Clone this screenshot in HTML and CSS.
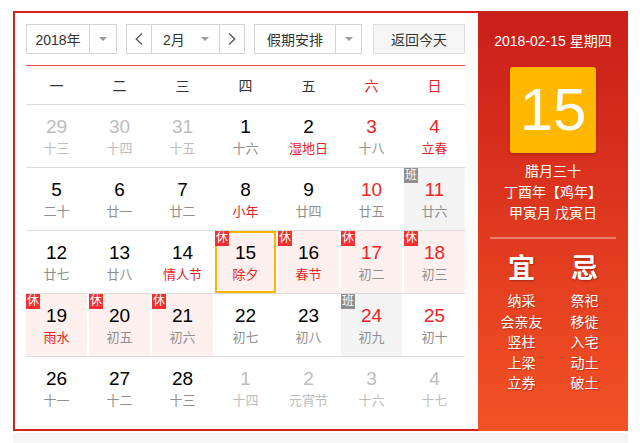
FILE: index.html
```html
<!DOCTYPE html>
<html lang="zh-CN">
<head>
<meta charset="utf-8">
<title>万年历</title>
<link rel="stylesheet" href="styles.css">
</head>
<body>
<div class="widget">
  <div class="cal">
    <div class="controls">
      <div class="sel year"><span class="sel-text">2018年</span><span class="sel-arrow"><i class="caret"></i></span></div>
      <div class="sel month">
        <span class="nav"><svg width="8" height="12" viewBox="0 0 8 12"><polyline points="7,0.5 1.2,6 7,11.5" fill="none" stroke="#555" stroke-width="1.3"/></svg></span>
        <span class="month-mid"><span>2月</span><i class="caret"></i></span>
        <span class="nav nav-r"><svg width="8" height="12" viewBox="0 0 8 12"><polyline points="1,0.5 6.8,6 1,11.5" fill="none" stroke="#555" stroke-width="1.3"/></svg></span>
      </div>
      <div class="sel holiday"><span class="sel-text">假期安排</span><span class="sel-arrow"><i class="caret"></i></span></div>
      <div class="btn">返回今天</div>
    </div>
    <div class="redline"></div>
    <div class="week">
      <span>一</span><span>二</span><span>三</span><span>四</span><span>五</span><span class="we">六</span><span class="we">日</span>
    </div>
    <div class="row">
      <div class="cell other"><div class="num">29</div><div class="lunar">十三</div></div>
      <div class="cell other"><div class="num">30</div><div class="lunar">十四</div></div>
      <div class="cell other"><div class="num">31</div><div class="lunar">十五</div></div>
      <div class="cell"><div class="num">1</div><div class="lunar">十六</div></div>
      <div class="cell"><div class="num">2</div><div class="lunar fest">湿地日</div></div>
      <div class="cell wkd"><div class="num">3</div><div class="lunar">十八</div></div>
      <div class="cell wkd"><div class="num">4</div><div class="lunar fest">立春</div></div>
    </div>
    <div class="row">
      <div class="cell"><div class="num">5</div><div class="lunar">二十</div></div>
      <div class="cell"><div class="num">6</div><div class="lunar">廿一</div></div>
      <div class="cell"><div class="num">7</div><div class="lunar">廿二</div></div>
      <div class="cell"><div class="num">8</div><div class="lunar fest">小年</div></div>
      <div class="cell"><div class="num">9</div><div class="lunar">廿四</div></div>
      <div class="cell wkd"><div class="num">10</div><div class="lunar">廿五</div></div>
      <div class="cell wkd work"><span class="badge ban">班</span><div class="num">11</div><div class="lunar">廿六</div></div>
    </div>
    <div class="row">
      <div class="cell"><div class="num">12</div><div class="lunar">廿七</div></div>
      <div class="cell"><div class="num">13</div><div class="lunar">廿八</div></div>
      <div class="cell"><div class="num">14</div><div class="lunar fest">情人节</div></div>
      <div class="cell rest today"><span class="badge">休</span><div class="num">15</div><div class="lunar fest">除夕</div></div>
      <div class="cell rest"><span class="badge">休</span><div class="num">16</div><div class="lunar fest">春节</div></div>
      <div class="cell rest wkd"><span class="badge">休</span><div class="num">17</div><div class="lunar">初二</div></div>
      <div class="cell rest wkd"><span class="badge">休</span><div class="num">18</div><div class="lunar">初三</div></div>
    </div>
    <div class="row">
      <div class="cell rest"><span class="badge">休</span><div class="num">19</div><div class="lunar fest">雨水</div></div>
      <div class="cell rest"><span class="badge">休</span><div class="num">20</div><div class="lunar">初五</div></div>
      <div class="cell rest"><span class="badge">休</span><div class="num">21</div><div class="lunar">初六</div></div>
      <div class="cell"><div class="num">22</div><div class="lunar">初七</div></div>
      <div class="cell"><div class="num">23</div><div class="lunar">初八</div></div>
      <div class="cell wkd work"><span class="badge ban">班</span><div class="num">24</div><div class="lunar">初九</div></div>
      <div class="cell wkd"><div class="num">25</div><div class="lunar">初十</div></div>
    </div>
    <div class="row">
      <div class="cell"><div class="num">26</div><div class="lunar">十一</div></div>
      <div class="cell"><div class="num">27</div><div class="lunar">十二</div></div>
      <div class="cell"><div class="num">28</div><div class="lunar">十三</div></div>
      <div class="cell other"><div class="num">1</div><div class="lunar">十四</div></div>
      <div class="cell other"><div class="num">2</div><div class="lunar">元宵节</div></div>
      <div class="cell other"><div class="num">3</div><div class="lunar">十六</div></div>
      <div class="cell other"><div class="num">4</div><div class="lunar">十七</div></div>
    </div>
  </div>
  <div class="side">
    <div class="side-date">2018-02-15 星期四</div>
    <div class="big-day">15</div>
    <div class="side-lunar">
      <div>腊月三十</div>
      <div>丁酉年【鸡年】</div>
      <div>甲寅月 戊寅日</div>
    </div>
    <div class="side-sep"></div>
    <div class="yiji">
      <div class="yj-col">
        <div class="yj-title">宜</div>
        <div>纳采</div><div>会亲友</div><div>竖柱</div><div>上梁</div><div>立券</div>
      </div>
      <div class="yj-col">
        <div class="yj-title">忌</div>
        <div>祭祀</div><div>移徙</div><div>入宅</div><div>动土</div><div>破土</div>
      </div>
    </div>
  </div>
</div>
<div class="below"></div>
</body>
</html>
```

FILE: styles.css
```css
* { box-sizing: border-box; }
html, body { margin: 0; padding: 0; background: #fff; }
body {
  font-family: "Liberation Sans", "Noto Sans CJK SC", sans-serif;
  color: #333;
  padding: 11px 0 0 13px;
}
.widget {
  display: flex;
  width: 615px;
  height: 420px;
}
.cal {
  width: 465px;
  border: 2px solid #d8201c;
  border-right: none;
  padding: 11px 13px 10px 11px;
  background: #fff;
}
.controls {
  display: flex;
  height: 30px;
  font-size: 14px;
  color: #333;
}
.sel {
  display: flex;
  border: 1px solid #d4d4d4;
  background: #fff;
  height: 30px;
}
.sel-text {
  display: flex;
  align-items: center;
  justify-content: center;
}
.sel-arrow {
  display: flex;
  align-items: center;
  justify-content: center;
  border-left: 1px solid #d4d4d4;
}
.caret {
  display: block;
  width: 0;
  height: 0;
  border-left: 4px solid transparent;
  border-right: 4px solid transparent;
  border-top: 4px solid #9a9a9a;
}
.year { width: 91px; }
.year .sel-text { width: 62px; }
.year .sel-arrow { width: 27px; }
.month { width: 119px; margin-left: 9px; }
.nav {
  width: 25px;
  display: flex;
  align-items: center;
  justify-content: center;
}
.nav-r { border-left: 1px solid #d4d4d4; }
.month .nav:first-child { border-right: 1px solid #d4d4d4; }
.month-mid {
  width: 67px;
  display: flex;
  align-items: center;
  justify-content: space-between;
  padding: 0 10px 0 11px;
}
.holiday { width: 108px; margin-left: 9px; }
.holiday .sel-text { width: 80px; }
.holiday .sel-arrow { width: 26px; }
.btn {
  width: 92px;
  margin-left: 11px;
  height: 30px;
  border: 1px solid #dedede;
  background: #f5f5f5;
  display: flex;
  align-items: center;
  justify-content: center;
}
.redline {
  height: 1px;
  background: #f04a4a;
  margin-top: 11px;
}
.week, .row {
  display: grid;
  grid-template-columns: repeat(7, 61px);
  column-gap: 2px;
}
.week {
  height: 38px;
  align-items: center;
  text-align: center;
  font-size: 14px;
  color: #333;
}
.week .we { color: #e8231f; }
.row { border-top: 1px solid #dcdcdc; }
.cell {
  position: relative;
  height: 62px;
  padding-top: 11px;
  text-align: center;
}
.num {
  font-size: 19px;
  line-height: 22px;
  color: #000;
}
.lunar {
  font-size: 13px;
  line-height: 22px;
  color: #8f8f8f;
}
.wkd .num { color: #ee2424; }
.lunar.fest { color: #e8231f; }
.other .num, .other .lunar { color: #bdbdbd; }
.rest { background: #fff0f0; }
.work { background: #f4f4f4; }
.today {
  border: 2px solid #ffb400;
  padding-top: 9px;
}
.badge {
  position: absolute;
  left: 0;
  top: 0;
  width: 14px;
  height: 15px;
  font-size: 12px;
  line-height: 15px;
  text-align: center;
  color: #fff;
  background: #f2312f;
}
.today .badge { left: -2px; top: -2px; }
.badge.ban { background: #8e8e8e; }
.side {
  width: 150px;
  height: 420px;
  background: linear-gradient(#c91e1a, #f35225);
  color: #fff;
  display: flex;
  flex-direction: column;
  align-items: center;
  padding-top: 20px;
}
.side-date {
  font-size: 14px;
  line-height: 20px;
}
.big-day {
  margin-top: 16px;
  width: 86px;
  height: 86px;
  background: #ffb800;
  border-radius: 3px;
  box-shadow: 0 2px 3px rgba(120, 20, 0, 0.35);
  font-size: 60px;
  line-height: 86px;
  text-align: center;
  color: #fff;
}
.side-lunar {
  margin-top: 8px;
  font-size: 14px;
  line-height: 21px;
  text-align: center;
}
.side-sep {
  margin-top: 13px;
  width: 126px;
  height: 2px;
  background: rgba(255, 255, 255, 0.35);
}
.yiji {
  display: grid;
  grid-template-columns: 63px 63px;
  margin-top: 15px;
}
.yj-col {
  text-align: center;
  font-size: 14px;
  line-height: 20.6px;
  text-shadow: 1px 1px 1px rgba(110, 0, 0, 0.35);
}
.yj-title {
  font-size: 27px;
  line-height: 30px;
  font-weight: bold;
  margin-bottom: 7px;
  text-shadow: 1px 1px 2px rgba(110, 0, 0, 0.45);
}
.below {
  width: 615px;
  height: 12px;
  margin-top: 2px;
  background: #f5f5f5;
}
```
